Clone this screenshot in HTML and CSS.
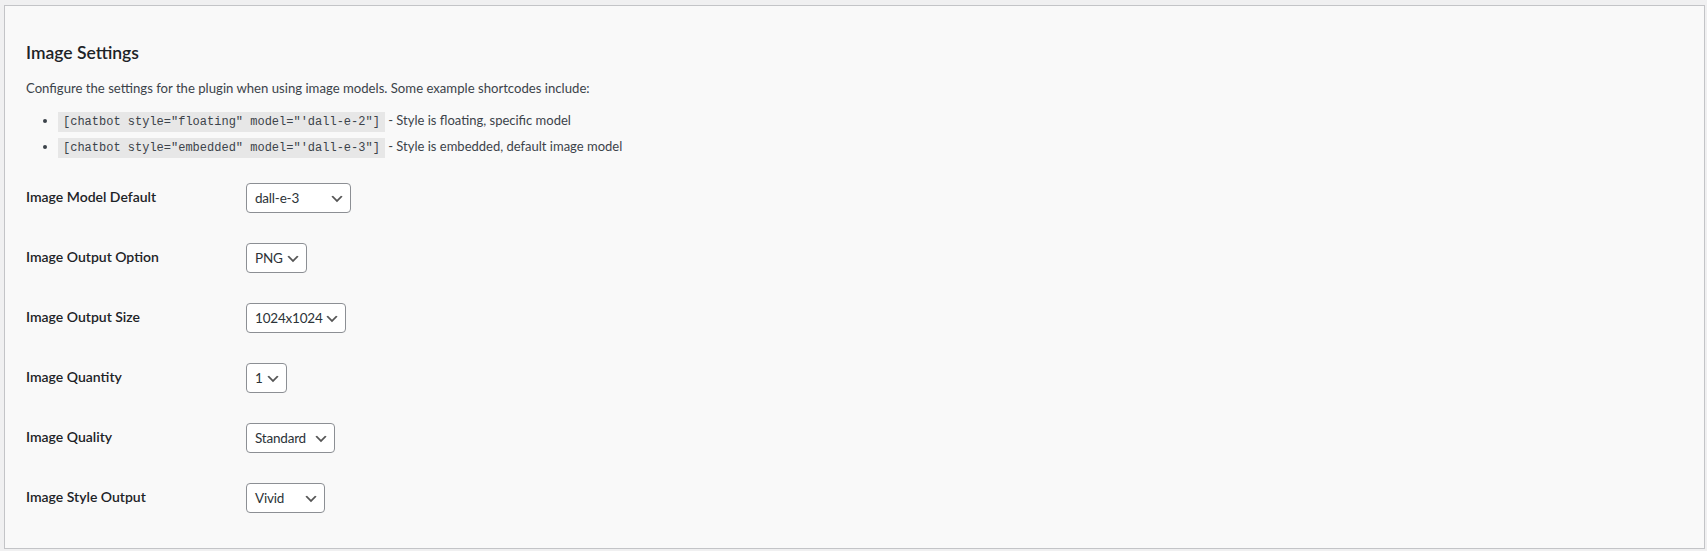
FILE: index.html
```html
<!DOCTYPE html>
<html lang="en">
<head>
<meta charset="utf-8">
<title>Image Settings</title>
<link rel="stylesheet" href="styles.css">
</head>
<body>
<div class="panel">
  <h2 class="title">Image Settings</h2>
  <p class="intro">Configure the settings for the plugin when using image models. Some example shortcodes include:</p>
  <ul class="examples">
    <li><code>[chatbot style="floating" model="'dall-e-2"]</code> - Style is floating, specific model</li>
    <li><code>[chatbot style="embedded" model="'dall-e-3"]</code> - Style is embedded, default image model</li>
  </ul>
  <table class="form-table">
    <tbody>
      <tr>
        <th>Image Model Default</th>
        <td><div class="select w-model"><span>dall-e-3</span><svg class="chev" viewBox="0 0 20 20"><path d="M5 6l5 5 5-5 2 1-7 7-7-7 2-1z"/></svg></div></td>
      </tr>
      <tr>
        <th>Image Output Option</th>
        <td><div class="select w-format"><span>PNG</span><svg class="chev" viewBox="0 0 20 20"><path d="M5 6l5 5 5-5 2 1-7 7-7-7 2-1z"/></svg></div></td>
      </tr>
      <tr>
        <th>Image Output Size</th>
        <td><div class="select w-size"><span>1024x1024</span><svg class="chev" viewBox="0 0 20 20"><path d="M5 6l5 5 5-5 2 1-7 7-7-7 2-1z"/></svg></div></td>
      </tr>
      <tr>
        <th>Image Quantity</th>
        <td><div class="select w-qty"><span>1</span><svg class="chev" viewBox="0 0 20 20"><path d="M5 6l5 5 5-5 2 1-7 7-7-7 2-1z"/></svg></div></td>
      </tr>
      <tr>
        <th>Image Quality</th>
        <td><div class="select w-quality"><span>Standard</span><svg class="chev" viewBox="0 0 20 20"><path d="M5 6l5 5 5-5 2 1-7 7-7-7 2-1z"/></svg></div></td>
      </tr>
      <tr>
        <th>Image Style Output</th>
        <td><div class="select w-style"><span>Vivid</span><svg class="chev" viewBox="0 0 20 20"><path d="M5 6l5 5 5-5 2 1-7 7-7-7 2-1z"/></svg></div></td>
      </tr>
    </tbody>
  </table>
</div>
</body>
</html>
```
FILE: styles.css
```css
html, body {
  margin: 0;
  padding: 0;
}
body {
  background: #f0f0f1;
  font-family: Lato, "Liberation Sans", sans-serif;
  font-size: 13px;
  color: #3c434a;
  padding: 5px 2px 2px 4px;
}
.panel {
  background: #f9f9f9;
  border: 1px solid #c3c4c7;
  padding: 36px 20px 11px 21px;
}
.title {
  font-size: 17.5px;
  font-weight: 600;
  line-height: 1.3;
  color: #1d2327;
  margin: 0 0 14px 0;
}
.intro {
  font-size: 13.15px;
  margin: 0 0 13px 0;
  line-height: 1.5;
}
.examples {
  list-style: disc outside;
  margin: 0;
  padding-left: 32px;
}
.examples li {
  line-height: 1.5;
  margin-bottom: 6px;
}
code {
  font-family: "Liberation Mono", monospace;
  font-size: 12px;
  background: rgba(0, 0, 0, 0.07);
  padding: 3px 5px 3px;
  color: #3c434a;
}
.form-table {
  border-collapse: collapse;
  margin-top: 11px;
  margin-bottom: 9px;
  width: 100%;
}
.form-table th {
  width: 200px;
  padding: 20px 10px 20px 0;
  text-align: left;
  vertical-align: top;
  font-size: 14px;
  font-weight: 600;
  line-height: 1.3;
  color: #1d2327;
}
.form-table td {
  padding: 15px 10px;
  vertical-align: middle;
  font-size: 14px;
  line-height: 1.3;
}
.select {
  box-sizing: border-box;
  display: flex;
  align-items: center;
  height: 30px;
  padding: 0 5px 0 8px;
  border: 1px solid #8c8f94;
  border-radius: 4px;
  background: #fff;
  color: #2c3338;
  font-size: 13.5px;
  letter-spacing: -0.2px;
}
.select span {
  flex: 1;
  white-space: nowrap;
}
.chev {
  width: 16px;
  height: 16px;
  margin-top: 1px;
  fill: #555;
  flex: none;
}
.w-model { width: 105px; }
.w-format { width: 61px; }
.w-size { width: 100px; }
.w-qty { width: 41px; }
.w-quality { width: 89px; }
.w-style { width: 79px; }
```
